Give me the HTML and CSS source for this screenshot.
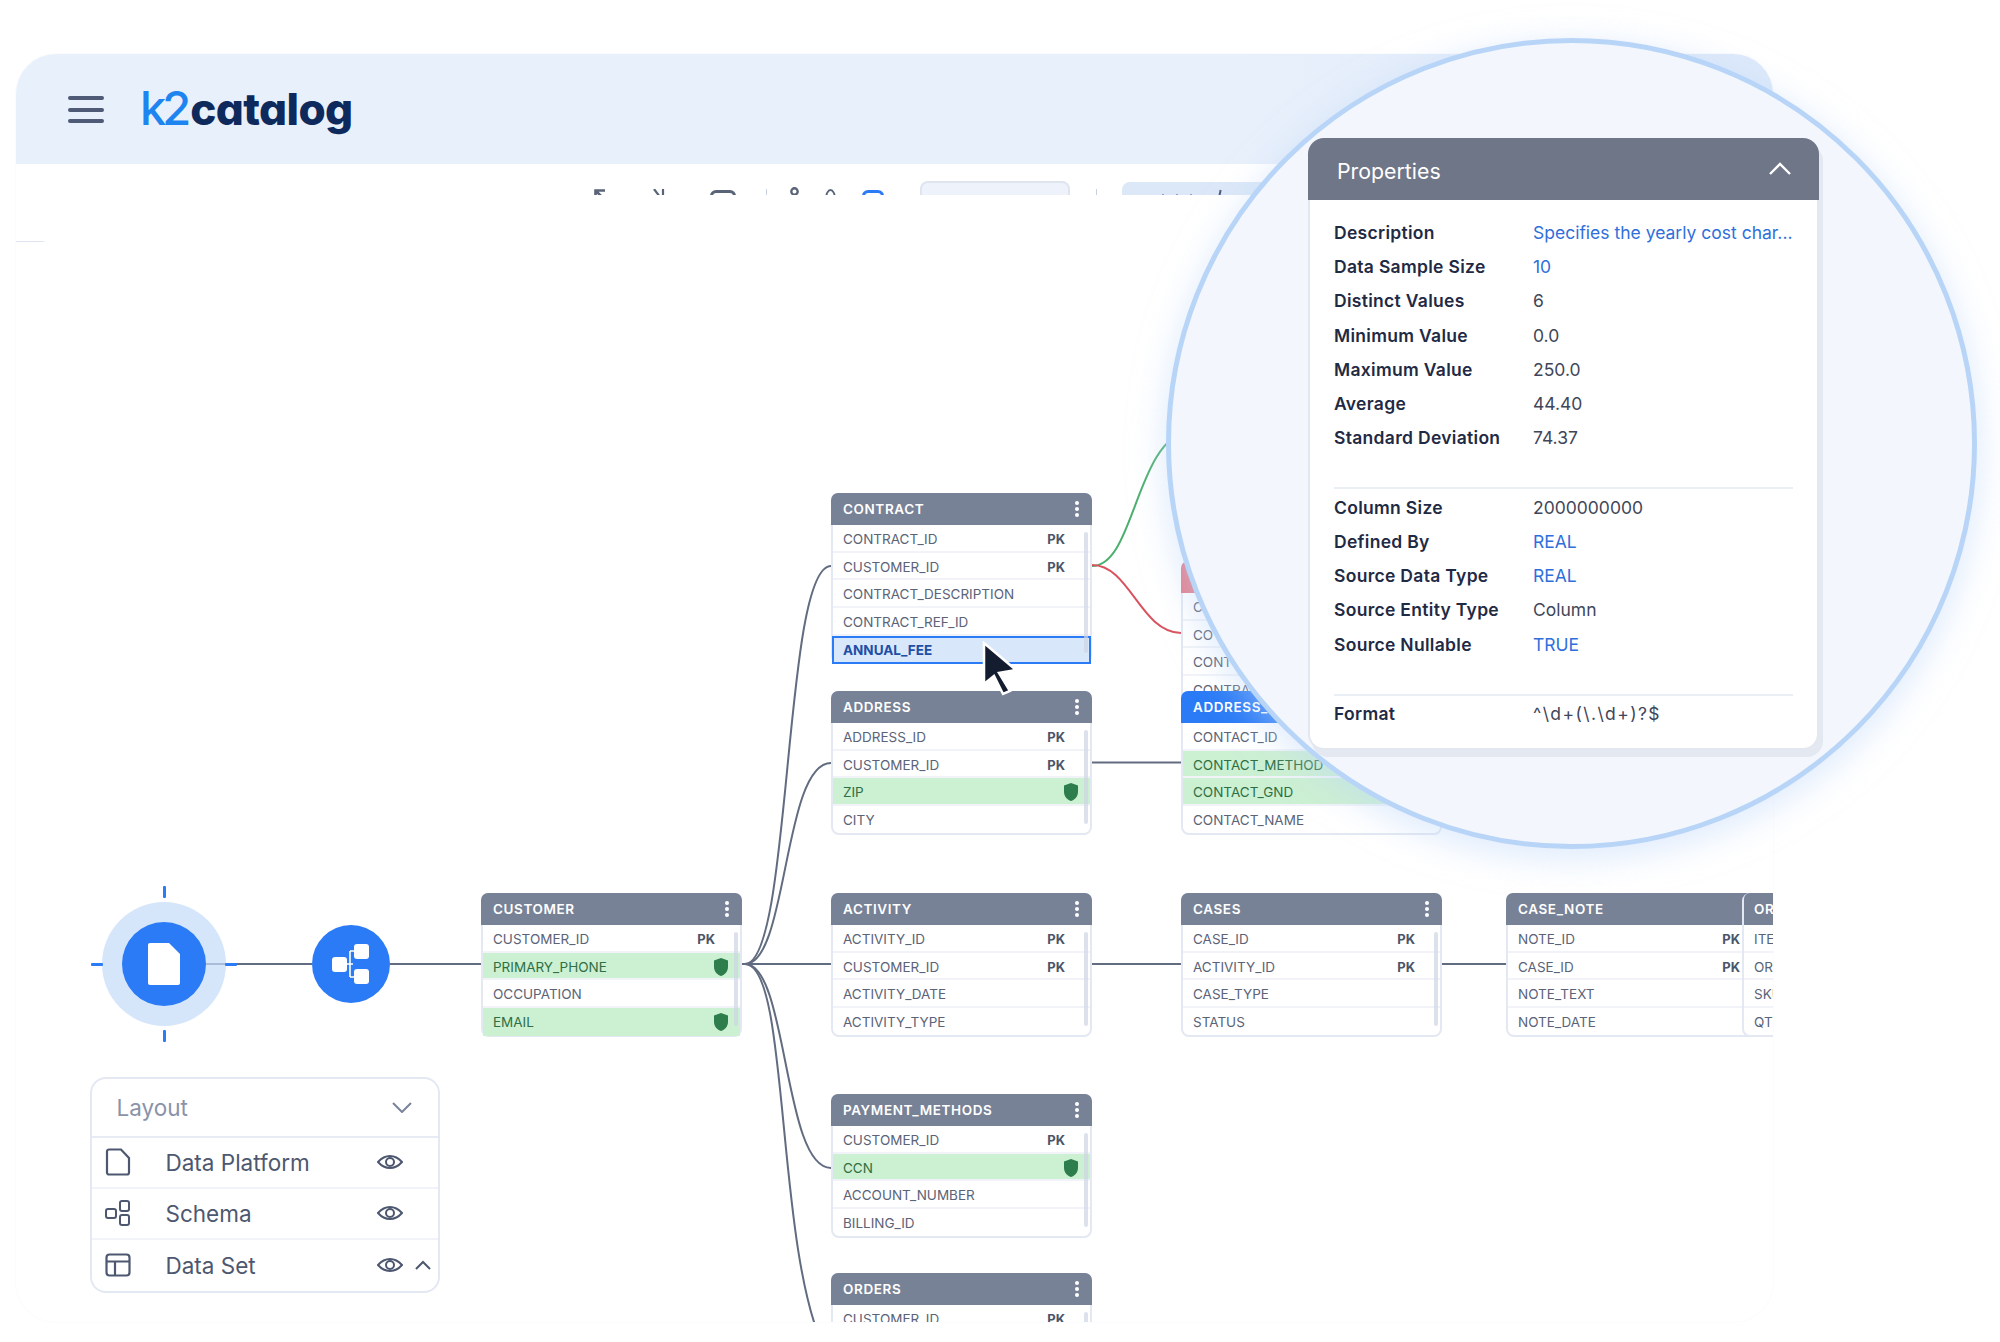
FILE: index.html
```html
<!DOCTYPE html>
<html lang="en">
<head>
<meta charset="UTF-8">
<meta name="viewport" content="width=device-width, initial-scale=1.0">
<title>k2catalog</title>
<link rel="stylesheet" href="styles.css">
</head>
<body>
<div class="frame">
    <header class="topbar">
        <div class="burger"><span></span><span></span><span></span></div>
        <div class="logo"><span class="logo-k2">k2</span><span class="logo-name">catalog</span></div>
    </header>

    <div class="toolbar">
        <svg class="tb-icon" width="12" height="12" viewBox="0 0 12 12"><path d="M1.5 12V1.5H11M1.5 1.5L11 11" fill="none" stroke="#5a6479" stroke-width="2.6"/></svg>
        <svg class="tb-icon tb-x" width="12" height="12" viewBox="0 0 12 12"><path d="M1 0l9 12M10 0v12" fill="none" stroke="#5a6479" stroke-width="2.2"/></svg>
        <span class="tb-rect"></span>
        <span class="tb-sep"></span>
        <svg class="tb-person" width="11" height="20" viewBox="0 0 11 20"><circle cx="5.5" cy="4.5" r="3.2" fill="none" stroke="#5a6479" stroke-width="2.4"/><rect x="1.2" y="9" width="8.6" height="12" rx="4" fill="none" stroke="#5a6479" stroke-width="2.4"/></svg>
        <span class="tb-person-small"></span>
        <span class="tb-rect tb-rect-blue"></span>
        <span class="tb-input"></span>
        <span class="tb-sep tb-sep-wide"></span>
        <span class="tb-filled"><span class="tb-filled-dots"></span><span class="tb-filled-tick"></span></span>
    </div>

    <div class="canvas">
        <span class="ruler-tick"></span>

        <svg class="wires" width="1757" height="1127" viewBox="16 195 1757 1127">
            <g fill="none" stroke="#626c80" stroke-width="2">
                <path d="M206 964H312"/>
                <path d="M390 964H481"/>
                <path d="M742 964H831"/>
                <path d="M1092 762.5H1181"/>
                <path d="M1092 964H1181"/>
                <path d="M1442 964H1507"/>
                <path d="M745 964C792 964 783 566 831 566"/>
                <path d="M745 964C788 964 783 763 831 763"/>
                <path d="M745 964C788 964 783 1168 831 1168"/>
                <path d="M745 964C790 964 775 1250 825 1350"/>
            </g>
            <path d="M1092 566C1135 566 1135 440 1190 430" fill="none" stroke="#4caf6e" stroke-width="2"/>
            <path d="M1092 565C1130 565 1140 632 1181 633" fill="none" stroke="#d9535f" stroke-width="2"/>
        </svg>

        <div class="node-ring">
            <span class="tick tick-top"></span>
            <span class="tick tick-bottom"></span>
            <span class="tick tick-left"></span>
            <span class="tick tick-right"></span>
            <div class="node-disc">
                <svg width="34" height="44" viewBox="0 0 34 44"><path d="M3 1H22L33 12V41a2 2 0 0 1-2 2H3a2 2 0 0 1-2-2V3a2 2 0 0 1 2-2z" fill="#fff"/></svg>
            </div>
        </div>

        <div class="node-schema">
            <svg width="38" height="40" viewBox="0 0 38 40">
                <rect x="0" y="13" width="15" height="15" rx="3" fill="#fff"/>
                <rect x="22" y="0" width="15" height="15" rx="3" fill="#fff"/>
                <rect x="22" y="25" width="15" height="15" rx="3" fill="#fff"/>
                <path d="M15 20H21M18 7H22M18 33H22M18 7V33" fill="none" stroke="#fff" stroke-width="1.6"/>
            </svg>
        </div>

        <div class="tbl tbl-customer">
            <div class="tbl-head">CUSTOMER<span class="dots"></span></div>
            <div class="tbl-row">CUSTOMER_ID<b class="pk">PK</b></div>
            <div class="tbl-row is-pii">PRIMARY_PHONE<svg class="shield" width="14" height="18" viewBox="0 0 14 18"><path d="M7 0l7 2.4V9c0 4.5-3.2 7.6-7 9-3.8-1.4-7-4.5-7-9V2.4z"/></svg></div>
            <div class="tbl-row">OCCUPATION</div>
            <div class="tbl-row is-pii">EMAIL<svg class="shield" width="14" height="18" viewBox="0 0 14 18"><path d="M7 0l7 2.4V9c0 4.5-3.2 7.6-7 9-3.8-1.4-7-4.5-7-9V2.4z"/></svg></div>
        </div>

        <div class="tbl tbl-contract">
            <div class="tbl-head">CONTRACT<span class="dots"></span></div>
            <div class="tbl-row">CONTRACT_ID<b class="pk">PK</b></div>
            <div class="tbl-row">CUSTOMER_ID<b class="pk">PK</b></div>
            <div class="tbl-row">CONTRACT_DESCRIPTION</div>
            <div class="tbl-row">CONTRACT_REF_ID</div>
            <div class="tbl-row is-selected">ANNUAL_FEE</div>
        </div>

        <div class="tbl tbl-address">
            <div class="tbl-head">ADDRESS<span class="dots"></span></div>
            <div class="tbl-row">ADDRESS_ID<b class="pk">PK</b></div>
            <div class="tbl-row">CUSTOMER_ID<b class="pk">PK</b></div>
            <div class="tbl-row is-pii">ZIP<svg class="shield" width="14" height="18" viewBox="0 0 14 18"><path d="M7 0l7 2.4V9c0 4.5-3.2 7.6-7 9-3.8-1.4-7-4.5-7-9V2.4z"/></svg></div>
            <div class="tbl-row">CITY</div>
        </div>

        <div class="tbl tbl-activity">
            <div class="tbl-head">ACTIVITY<span class="dots"></span></div>
            <div class="tbl-row">ACTIVITY_ID<b class="pk">PK</b></div>
            <div class="tbl-row">CUSTOMER_ID<b class="pk">PK</b></div>
            <div class="tbl-row">ACTIVITY_DATE</div>
            <div class="tbl-row">ACTIVITY_TYPE</div>
        </div>

        <div class="tbl tbl-payment">
            <div class="tbl-head">PAYMENT_METHODS<span class="dots"></span></div>
            <div class="tbl-row">CUSTOMER_ID<b class="pk">PK</b></div>
            <div class="tbl-row is-pii">CCN<svg class="shield" width="14" height="18" viewBox="0 0 14 18"><path d="M7 0l7 2.4V9c0 4.5-3.2 7.6-7 9-3.8-1.4-7-4.5-7-9V2.4z"/></svg></div>
            <div class="tbl-row">ACCOUNT_NUMBER</div>
            <div class="tbl-row">BILLING_ID</div>
        </div>

        <div class="tbl tbl-orders">
            <div class="tbl-head">ORDERS<span class="dots"></span></div>
            <div class="tbl-row">CUSTOMER_ID<b class="pk">PK</b></div>
        </div>

        <div class="tbl tbl-hidden">
            <div class="tbl-head tbl-head-red"></div>
            <div class="tbl-row">C</div>
            <div class="tbl-row">CO</div>
            <div class="tbl-row">CONT</div>
            <div class="tbl-row">CONTRA</div>
        </div>

        <div class="tbl tbl-contact">
            <div class="tbl-head tbl-head-blue">ADDRESS_</div>
            <div class="tbl-row">CONTACT_ID</div>
            <div class="tbl-row is-pii">CONTACT_METHOD</div>
            <div class="tbl-row is-pii">CONTACT_GND</div>
            <div class="tbl-row">CONTACT_NAME</div>
        </div>

        <div class="tbl tbl-cases">
            <div class="tbl-head">CASES<span class="dots"></span></div>
            <div class="tbl-row">CASE_ID<b class="pk">PK</b></div>
            <div class="tbl-row">ACTIVITY_ID<b class="pk">PK</b></div>
            <div class="tbl-row">CASE_TYPE</div>
            <div class="tbl-row">STATUS</div>
        </div>

        <div class="tbl tbl-note">
            <div class="tbl-head">CASE_NOTE<span class="dots"></span></div>
            <div class="tbl-row">NOTE_ID<b class="pk">PK</b></div>
            <div class="tbl-row">CASE_ID<b class="pk">PK</b></div>
            <div class="tbl-row">NOTE_TEXT</div>
            <div class="tbl-row">NOTE_DATE</div>
        </div>

        <div class="tbl tbl-items">
            <div class="tbl-head">ORDER_ITEMS</div>
            <div class="tbl-row">ITEM_ID</div>
            <div class="tbl-row">ORDER_ID</div>
            <div class="tbl-row">SKU</div>
            <div class="tbl-row">QTY</div>
        </div>

        <div class="layout-panel">
            <div class="layout-head">
                <span>Layout</span>
                <svg width="20" height="11" viewBox="0 0 20 11"><path d="M1 1l9 9 9-9" fill="none" stroke="#79849a" stroke-width="2"/></svg>
            </div>
            <div class="layout-row">
                <svg class="layout-icon" width="26" height="28" viewBox="0 0 26 28"><path d="M4 1.5H16L24 10V24.5a2 2 0 0 1-2 2H4a2 2 0 0 1-2-2V3.5a2 2 0 0 1 2-2z" fill="none" stroke="#4d5870" stroke-width="2.2"/></svg>
                <span class="layout-name">Data Platform</span>
                <svg class="eye" width="26" height="14" viewBox="0 0 26 14"><path d="M1 7C5 2.5 9 1 13 1s8 1.5 12 6c-4 4.5-8 6-12 6S5 11.5 1 7z" fill="none" stroke="#4d5870" stroke-width="2"/><circle cx="13" cy="7" r="4" fill="none" stroke="#4d5870" stroke-width="2"/></svg>
            </div>
            <div class="layout-row">
                <svg class="layout-icon" width="26" height="26" viewBox="0 0 26 26"><rect x="1" y="9" width="10" height="9" rx="2" fill="none" stroke="#4d5870" stroke-width="2"/><rect x="15" y="1" width="9" height="10" rx="2" fill="none" stroke="#4d5870" stroke-width="2"/><rect x="15" y="15" width="9" height="10" rx="2" fill="none" stroke="#4d5870" stroke-width="2"/></svg>
                <span class="layout-name">Schema</span>
                <svg class="eye" width="26" height="14" viewBox="0 0 26 14"><path d="M1 7C5 2.5 9 1 13 1s8 1.5 12 6c-4 4.5-8 6-12 6S5 11.5 1 7z" fill="none" stroke="#4d5870" stroke-width="2"/><circle cx="13" cy="7" r="4" fill="none" stroke="#4d5870" stroke-width="2"/></svg>
            </div>
            <div class="layout-row">
                <svg class="layout-icon" width="26" height="24" viewBox="0 0 26 24"><rect x="1.5" y="1.5" width="23" height="21" rx="3" fill="none" stroke="#4d5870" stroke-width="2.2"/><path d="M1.5 8.5H24.5M10 8.5V22.5" fill="none" stroke="#4d5870" stroke-width="2.2"/></svg>
                <span class="layout-name">Data Set</span>
                <svg class="eye" width="26" height="14" viewBox="0 0 26 14"><path d="M1 7C5 2.5 9 1 13 1s8 1.5 12 6c-4 4.5-8 6-12 6S5 11.5 1 7z" fill="none" stroke="#4d5870" stroke-width="2"/><circle cx="13" cy="7" r="4" fill="none" stroke="#4d5870" stroke-width="2"/></svg>
                <svg class="layout-up" width="16" height="10" viewBox="0 0 16 10"><path d="M1 9l7-7 7 7" fill="none" stroke="#4d5870" stroke-width="2"/></svg>
            </div>
        </div>

        <svg class="cursor" width="38" height="56" viewBox="-2 -2 38 56"><path d="M0 0L32 27L15 30L26 48L19 51L10 33L0 41z" fill="#141c30" stroke="#fff" stroke-width="2.5"/></svg>
    </div>
</div>

<div class="lens">
    <div class="props">
        <div class="props-head">
            <span>Properties</span>
            <svg width="24" height="14" viewBox="0 0 24 14"><path d="M2 12L12 2l10 10" fill="none" stroke="#fff" stroke-width="2.4"/></svg>
        </div>
        <div class="props-group">
            <div class="prop"><span class="prop-key">Description</span><span class="prop-val is-link">Specifies the yearly cost char...</span></div>
            <div class="prop"><span class="prop-key">Data Sample Size</span><span class="prop-val is-link">10</span></div>
            <div class="prop"><span class="prop-key">Distinct Values</span><span class="prop-val">6</span></div>
            <div class="prop"><span class="prop-key">Minimum Value</span><span class="prop-val">0.0</span></div>
            <div class="prop"><span class="prop-key">Maximum Value</span><span class="prop-val">250.0</span></div>
            <div class="prop"><span class="prop-key">Average</span><span class="prop-val">44.40</span></div>
            <div class="prop"><span class="prop-key">Standard Deviation</span><span class="prop-val">74.37</span></div>
        </div>
        <div class="props-group">
            <div class="prop"><span class="prop-key">Column Size</span><span class="prop-val">2000000000</span></div>
            <div class="prop"><span class="prop-key">Defined By</span><span class="prop-val is-link">REAL</span></div>
            <div class="prop"><span class="prop-key">Source Data Type</span><span class="prop-val is-link">REAL</span></div>
            <div class="prop"><span class="prop-key">Source Entity Type</span><span class="prop-val">Column</span></div>
            <div class="prop"><span class="prop-key">Source Nullable</span><span class="prop-val is-link">TRUE</span></div>
        </div>
        <div class="props-group props-last">
            <div class="prop"><span class="prop-key">Format</span><span class="prop-val prop-format">^\d+(\.\d+)?$</span></div>
        </div>
    </div>
</div>
</body>
</html>
```
FILE: styles.css
```css
* {
    box-sizing: border-box;
}
body {
    margin: 0;
    padding: 54px 0 0 16px;
    height: 1342px;
    overflow: hidden;
    position: relative;
    background-color: #fff;
    font-family: Inter, "Noto Sans", sans-serif;
}
.frame {
    width: 1757px;
    height: 1268px;
    display: flex;
    flex-direction: column;
    overflow: hidden;
    border-radius: 40px;
    background-color: #fff;
    box-shadow: 0 0 0 1px #fbfcfd;
}

/* top bar */
.topbar {
    height: 110px;
    flex: none;
    display: flex;
    align-items: center;
    padding-left: 52px;
    background: linear-gradient(90deg, #e8f0fb 70%, #dde9fa 100%);
}
.burger {
    width: 36px;
    display: flex;
    flex-direction: column;
    gap: 7.5px;
    margin-top: 1px;
}
.burger span {
    height: 4px;
    border-radius: 2px;
    background-color: #4f5b76;
}
.logo {
    margin-left: 36px;
    display: flex;
    align-items: baseline;
    margin-top: -4px;
}
.logo-k2 {
    font-size: 47px;
    font-weight: 500;
    letter-spacing: -4px;
    color: #1d84f0;
}
.logo-name {
    margin-left: 3px;
    font-size: 44px;
    font-weight: 800;
    letter-spacing: -0.6px;
    color: #0e2a5c;
    font-feature-settings: "cv11";
}

/* toolbar, only its top edge shows */
.toolbar {
    height: 31px;
    flex: none;
    display: flex;
    align-items: flex-start;
    padding: 25px 0 0 578px;
    overflow: hidden;
}
.tb-x {
    margin-left: 47px;
}
.tb-rect {
    width: 26px;
    height: 20px;
    margin: 1px 0 0 45px;
    border: 3px solid #5a6479;
    border-radius: 6px;
}
.tb-rect-blue {
    width: 22px;
    margin-left: 26px;
    border-color: #2b7bf6;
}
.tb-sep {
    width: 1px;
    height: 20px;
    margin-left: 30px;
    background-color: #c9d0de;
}
.tb-person {
    margin: -2px 0 0 22px;
}
.tb-person-small {
    width: 11px;
    height: 20px;
    margin-left: 25px;
    border: 2.5px solid #5a6479;
    border-radius: 50%;
}
.tb-input {
    width: 150px;
    height: 30px;
    margin: -8px 0 0 36px;
    border: 2px solid #dfe4ef;
    border-radius: 8px;
    background-color: #eef3fb;
}
.tb-sep-wide {
    margin-left: 26px;
}
.tb-filled {
    width: 200px;
    height: 30px;
    margin: -7px 0 0 25px;
    position: relative;
    border-radius: 8px;
    background-color: #dce8f8;
}
.tb-filled-tick {
    position: absolute;
    left: 97px;
    top: 8px;
    width: 2px;
    height: 6px;
    background-color: #4a5a80;
    transform: rotate(12deg);
}
.tb-filled-dots {
    position: absolute;
    left: 40px;
    top: 12px;
    width: 2px;
    height: 2px;
    background-color: #8fa2c4;
    box-shadow: 14px 0 0 #8fa2c4, 28px 0 0 #8fa2c4;
}

/* diagram */
.canvas {
    position: relative;
    flex: 1;
    overflow: hidden;
}
.ruler-tick {
    position: absolute;
    left: 0;
    top: 46px;
    width: 28px;
    height: 1px;
    background-color: #dfe4f2;
}
.wires {
    position: absolute;
    left: 0;
    top: 0;
}
.node-ring {
    position: absolute;
    left: 86px;
    top: 706.5px;
    width: 124px;
    height: 124px;
    display: flex;
    align-items: center;
    justify-content: center;
    border-radius: 50%;
    background-color: rgba(197, 221, 250, 0.72);
}
.node-disc {
    width: 84px;
    height: 84px;
    display: flex;
    align-items: center;
    justify-content: center;
    border-radius: 50%;
    background-color: #2b7bf6;
}
.tick {
    position: absolute;
    background-color: #2b7bf6;
    border-radius: 1px;
}
.tick-top,
.tick-bottom {
    left: 61px;
    width: 3px;
    height: 12px;
}
.tick-top {
    top: -16px;
}
.tick-bottom {
    bottom: -16px;
}
.tick-left,
.tick-right {
    top: 61px;
    width: 12px;
    height: 3px;
}
.tick-left {
    left: -11px;
}
.tick-right {
    right: -11px;
}
.node-schema {
    position: absolute;
    left: 296px;
    top: 729.5px;
    width: 78px;
    height: 78px;
    display: flex;
    align-items: center;
    justify-content: center;
    border-radius: 50%;
    background-color: #2b7bf6;
}

/* tables */
.tbl {
    position: absolute;
    width: 261px;
    border: 2px solid #e3e8f2;
    border-radius: 8px;
    background-color: #fff;
}
.tbl::after {
    content: "";
    position: absolute;
    right: 2px;
    top: 37px;
    bottom: 9px;
    width: 4px;
    border-radius: 2px;
    background-color: rgba(205, 212, 228, 0.7);
}
.tbl-head {
    height: 32px;
    margin: -2px -2px 0;
    padding-left: 12px;
    display: flex;
    align-items: center;
    justify-content: space-between;
    border-radius: 7px 7px 0 0;
    background-color: #788297;
    color: #fff;
    font-size: 13.5px;
    font-weight: 600;
    letter-spacing: 0.6px;
    white-space: nowrap;
}
.tbl-head-red {
    background-color: #e57b88;
}
.tbl-head-blue {
    background-color: #2b7bf6;
}
.dots {
    width: 4px;
    height: 4px;
    margin-right: 13px;
    border-radius: 50%;
    background-color: #fff;
    box-shadow: 0 -6px 0 #fff, 0 6px 0 #fff;
}
.tbl-row {
    height: 27.7px;
    padding-left: 10px;
    display: flex;
    align-items: center;
    position: relative;
    box-shadow: inset 0 -2px 0 #f1f3f8;
    color: #5a6377;
    font-size: 13.5px;
    white-space: nowrap;
}
.tbl-row:last-child {
    margin-bottom: -1px;
    box-shadow: none;
}
.pk {
    position: absolute;
    right: 25px;
    font-size: 13px;
    font-weight: 700;
    color: #4a5568;
}
.shield {
    position: absolute;
    right: 12px;
    fill: #2e7d4d;
}
.is-pii {
    background-color: #ccf0d2;
    color: #2f6f45;
}
.is-selected,
.is-selected:last-child {
    height: 28.7px;
    margin: 0 -1px -2px;
    padding-left: 9px;
    border: 2px solid #2b7bf6;
    background-color: #d9e7fa;
    color: #1d4fa5;
    font-weight: 700;
}
.tbl-contract { left: 815px; top: 298px; }
.tbl-address { left: 815px; top: 496px; }
.tbl-customer { left: 465px; top: 698px; }
.tbl-activity { left: 815px; top: 698px; }
.tbl-payment { left: 815px; top: 899px; }
.tbl-orders { left: 815px; top: 1078px; }
.tbl-hidden { left: 1165px; top: 366px; }
.tbl-contact { left: 1165px; top: 496px; }
.tbl-cases { left: 1165px; top: 698px; }
.tbl-note { left: 1490px; top: 698px; }
.tbl-items { left: 1726px; top: 698px; }
.tbl-items .tbl-head {
    margin-left: 0;
    padding-left: 10px;
    border-top-left-radius: 6px;
}

.cursor {
    position: absolute;
    left: 966px;
    top: 446px;
}

/* layout legend */
.layout-panel {
    position: absolute;
    left: 73.5px;
    top: 881.5px;
    width: 350px;
    border: 2px solid #e3e8f2;
    border-radius: 16px;
    background-color: #fff;
    color: #4d5870;
}
.layout-head {
    height: 59px;
    padding: 0 26px 0 25px;
    display: flex;
    align-items: center;
    justify-content: space-between;
    border-bottom: 2px solid #e6ebf4;
    color: #8a93a8;
    font-size: 22.5px;
}
.layout-row {
    height: 51px;
    display: flex;
    align-items: center;
    position: relative;
    padding-left: 74px;
    border-bottom: 2px solid #f1f3f8;
    font-size: 22.5px;
}
.layout-row:last-child {
    border-bottom: none;
}
.layout-icon {
    position: absolute;
    left: 13px;
}
.eye {
    position: absolute;
    left: 285px;
}
.layout-up {
    position: absolute;
    left: 323px;
}

/* magnifier */
.lens {
    position: absolute;
    left: 1166px;
    top: 38px;
    width: 811px;
    height: 811px;
    padding: 95px 0 0 137px;
    border: 5px solid #b8d5f8;
    border-radius: 50%;
    background-color: #f3f7fd;
    box-shadow: 0 8px 36px rgba(190, 215, 250, 0.55);
}
.props {
    width: 511px;
    height: 612px;
    border: 2px solid #e3e8f0;
    border-top: none;
    border-radius: 16px;
    background-color: #fff;
    box-shadow: 4px 7px 0 #e4e8f0;
}
.props-head {
    height: 62px;
    margin: 0 -2px;
    padding: 3px 27px 0 29px;
    display: flex;
    align-items: center;
    justify-content: space-between;
    border-radius: 16px 16px 0 0;
    background-color: #6f7687;
    color: #fff;
    font-size: 21.3px;
}
.props-head svg {
    margin-top: -3px;
}
.props-group {
    margin: 0 24px;
    padding: 15.5px 0 32.5px;
    border-bottom: 2px solid #eaeef5;
}
.props-group + .props-group {
    padding-top: 1px;
}
.props-last {
    border-bottom: none;
    padding-bottom: 0;
}
.prop {
    height: 34.2px;
    display: flex;
    align-items: center;
    font-size: 17.5px;
    white-space: nowrap;
}
.prop-key {
    width: 199px;
    flex: none;
    font-weight: 600;
    letter-spacing: 0.3px;
    color: #1f2a44;
}
.prop-val {
    color: #3f4659;
}
.prop-format {
    letter-spacing: 1.4px;
}
.is-link {
    color: #2f6fdb;
}
```
